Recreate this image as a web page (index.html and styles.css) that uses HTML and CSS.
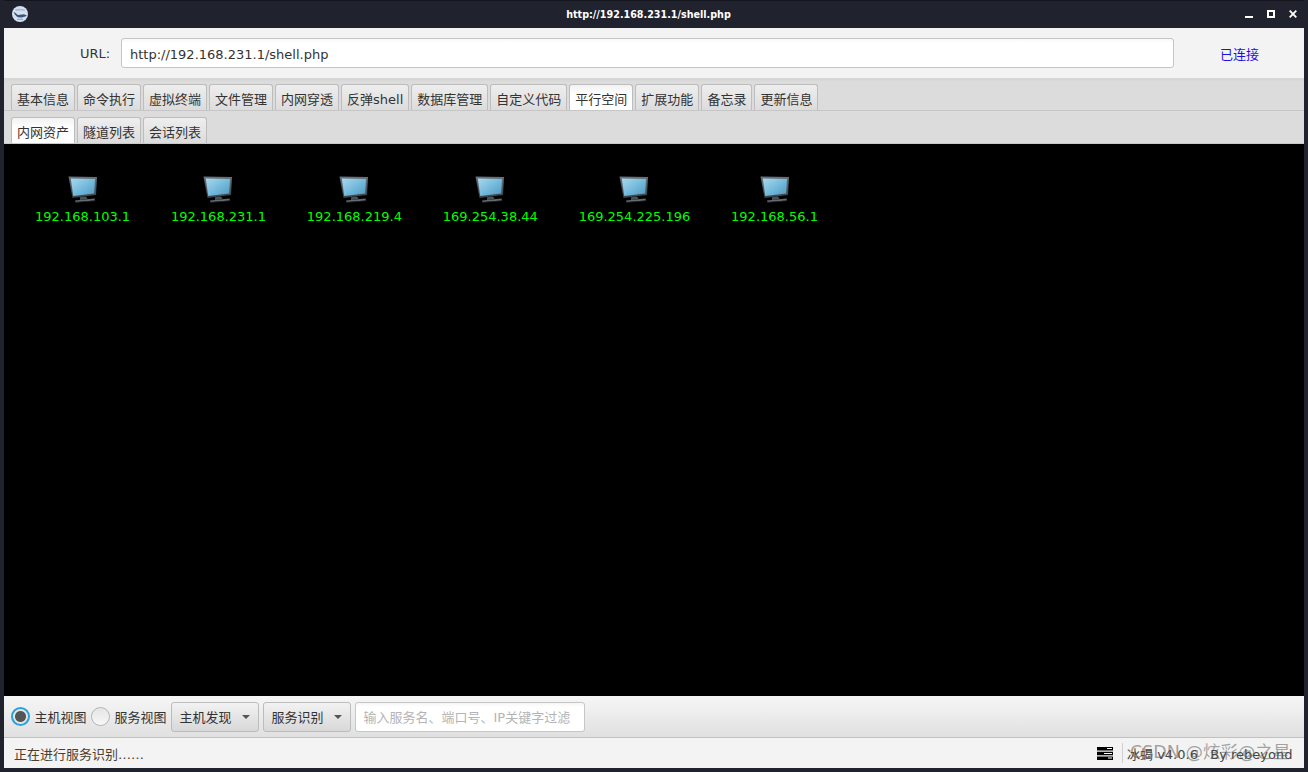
FILE: index.html
```html
<!DOCTYPE html>
<html lang="zh">
<head>
<meta charset="utf-8">
<title>http://192.168.231.1/shell.php</title>
<link rel="stylesheet" href="styles.css">
</head>
<body>
<div class="window">
  <header class="titlebar">
    <svg class="logo" width="16" height="16" viewBox="0 0 16 16"><circle cx="8" cy="8" r="8" fill="#d5e0ee"/><path d="M3 3.500C6 2.500 10 2.500 13 3.500L12.500 5C10 4.300 7 4.300 4 5Z" fill="#a9bcd6"/><path d="M1.500 6C3.500 6.500 4.500 8 6 9L12 8.200 15 9.500C13 11 10 11.500 8 11.500 5 11.500 3 9.500 1.500 6Z" fill="#3a5680"/><path d="M5 13.300h6" stroke="#8aa2c4" stroke-width="1"/></svg>
    <span class="title">http://192.168.231.1/shell.php</span>
    <div class="controls">
      <svg width="8" height="8" viewBox="0 0 8 8"><rect y="6" width="8" height="2" fill="#fff"/></svg>
      <svg width="8" height="8" viewBox="0 0 8 8"><path d="M0 0h8v8H0zM2 2v4h4V2z" fill="#fff" fill-rule="evenodd"/></svg>
      <svg width="8" height="8" viewBox="0 0 8 8"><path d="M.7.7l6.600 6.600M7.300.7L.7 7.300" stroke="#fff" stroke-width="1.800"/></svg>
    </div>
  </header>
  <div class="urlbar">
    <label class="url-label">URL:</label>
    <div class="url-input">http://192.168.231.1/shell.php</div>
    <span class="status-link">已连接</span>
  </div>
  <nav class="tabs main-tabs">
    <span class="tab">基本信息</span><span class="tab">命令执行</span><span class="tab">虚拟终端</span><span class="tab">文件管理</span><span class="tab">内网穿透</span><span class="tab">反弹shell</span><span class="tab">数据库管理</span><span class="tab">自定义代码</span><span class="tab active">平行空间</span><span class="tab">扩展功能</span><span class="tab">备忘录</span><span class="tab">更新信息</span>
  </nav>
  <nav class="tabs sub-tabs">
    <span class="tab active">内网资产</span><span class="tab">隧道列表</span><span class="tab">会话列表</span>
  </nav>
  <main class="canvas">
    <div class="host"><svg class="pc" viewBox="0 0 30 27"><use href="#monitor"/></svg><span>192.168.103.1</span></div>
    <div class="host"><svg class="pc" viewBox="0 0 30 27"><use href="#monitor"/></svg><span>192.168.231.1</span></div>
    <div class="host"><svg class="pc" viewBox="0 0 30 27"><use href="#monitor"/></svg><span>192.168.219.4</span></div>
    <div class="host"><svg class="pc" viewBox="0 0 30 27"><use href="#monitor"/></svg><span>169.254.38.44</span></div>
    <div class="host"><svg class="pc" viewBox="0 0 30 27"><use href="#monitor"/></svg><span>169.254.225.196</span></div>
    <div class="host"><svg class="pc" viewBox="0 0 30 27"><use href="#monitor"/></svg><span>192.168.56.1</span></div>
  </main>
  <div class="toolbar">
    <span class="radio on"></span><span class="radio-text">主机视图</span>
    <span class="radio"></span><span class="radio-text">服务视图</span>
    <button class="menu-btn">主机发现<i class="caret"></i></button>
    <button class="menu-btn">服务识别<i class="caret"></i></button>
    <div class="filter">输入服务名、端口号、IP关键字过滤</div>
  </div>
  <footer class="statusbar">
    <span class="status-text">正在进行服务识别……</span>
    <svg class="stack" width="16" height="13" viewBox="0 0 16 13"><path d="M0 0h16v3.500H0zM0 4.700h16v3.500H0zM0 9.500h16v3.500H0z" fill="#000"/><path d="M10 1.500h5M7 6.500h8M11 11h4" stroke="#fff"/></svg>
    <span class="sep"></span>
    <span class="version">冰蝎 v4.0.6&nbsp;&nbsp;&nbsp;By rebeyond<span class="watermark">CSDN @炫彩@之星</span></span>
  </footer>
</div>
<svg class="defs" width="0" height="0">
  <defs>
    <linearGradient id="scr" x1="0" y1="0" x2="1" y2="1"><stop offset="0" stop-color="#a9d8ee"/><stop offset=".55" stop-color="#72b8da"/><stop offset="1" stop-color="#5298c2"/></linearGradient>
    <linearGradient id="frm" x1="0" y1="0" x2="0" y2="1"><stop offset="0" stop-color="#66727d"/><stop offset="1" stop-color="#3a4046"/></linearGradient>
    <symbol id="monitor" viewBox="0 0 30 27">
      <path d="M0.500 .5L29 1 28 19 4.500 22Z" fill="url(#frm)"/>
      <path d="M2.800 2.500L27 3 26.200 17.500 5.200 20Z" fill="url(#scr)"/>
      <path d="M12 21.200L18 20.500 19.500 23 12 24Z" fill="#4b5258"/>
      <path d="M7 24.500L26.500 22.500 27 24.500 7.500 26Z" fill="#666c72"/>
      <path d="M7.500 26L27 24.500V25L7.500 26.700Z" fill="#2d3135"/>
    </symbol>
  </defs>
</svg>
</body>
</html>
```
FILE: styles.css
```css
* { box-sizing: border-box; }
html, body { margin: 0; height: 100%; }
body { background: #20232e; font: 13px "DejaVu Sans", "Noto Sans CJK SC", sans-serif; color: #333; overflow: hidden; }
.window { display: flex; flex-direction: column; width: 1308px; height: 772px; padding: 0 4px 4px; background: #20232e; }
.titlebar { position: relative; flex: 0 0 28px; display: flex; align-items: center; justify-content: center; padding-right: 11px; background: #20232e; border-top: 1px solid #14161d; }
.logo { position: absolute; left: 8px; top: 5px; }
.title { color: #fff; font-family: "DejaVu Sans Condensed", "DejaVu Sans", sans-serif; font-size: 10.670px; font-weight: 700; }
.controls { position: absolute; right: 7px; top: 9px; display: flex; gap: 14px; }
.controls svg { display: block; }
.urlbar { flex: 0 0 50px; display: flex; align-items: center; padding: 0 45px 0 76px; background: #f3f3f3; }
.url-label { width: 41px; margin-top: 1px; }
.url-input { width: 1053px; height: 30px; line-height: 31px; padding-left: 8px; background: linear-gradient(#f8f8f8, #fff 4px); border: 1px solid #c6c6c6; border-radius: 3px; color: #333; }
.status-link { margin-left: auto; color: #1e0fe6; }
.tabs { display: flex; gap: 2px; padding-left: 6.500px; background: #dcdcdc; }
.main-tabs { flex: 0 0 33px; align-items: flex-end; padding-top: 6px; background: linear-gradient(#d4d4d4, #dcdcdc 4px); border-bottom: 1px solid #c6c6c6; }
.sub-tabs { flex: 0 0 33px; align-items: flex-end; padding-top: 6px; border-bottom: 1px solid #c8c8c8; }
.tab { height: 26px; padding: 0 4.500px 0 5.500px; line-height: 29px; background: linear-gradient(#eeeeee, #dcdcdc); border: 1px solid #bdbdbd; border-bottom: 0; border-radius: 3px 3px 0 0; white-space: nowrap; }
.tab.active { background: linear-gradient(#f2f2f2, #fff 40%); }
.canvas { flex: 1; display: flex; gap: 40.800px; padding: 32px 0 0 31px; background: #000; }
.host { display: flex; flex-direction: column; align-items: center; color: #00ff00; }
.pc { width: 30px; height: 27px; margin-bottom: 6px; }
.toolbar { flex: 0 0 42px; display: flex; align-items: center; padding-left: 6.500px; background: linear-gradient(#f6f6f6, #e0e0e0); border-bottom: 1px solid #c0c0c0; }
.radio { width: 19px; height: 19px; border-radius: 50%; border: 1px solid #b5b5b5; background: linear-gradient(#e4e4e4, #f8f8f8); }
.radio.on { border: 2px solid #2aa3dc; background: radial-gradient(circle, #555 0 5px, #e6e6e6 6px); }
.radio-text { margin: 0 4px 0 5px; color: #333; }
.menu-btn { display: inline-flex; align-items: center; justify-content: space-between; width: 88px; height: 30px; margin-right: 4px; padding: 0 8px; font: inherit; color: #333; background: linear-gradient(#f2f2f2, #d8d8d8); border: 1px solid #bcbcbc; border-radius: 3px; }
.caret { width: 0; height: 0; border: 4px solid transparent; border-top: 4px solid #555; border-bottom: 0; }
.filter { width: 230px; height: 30px; line-height: 29px; padding-left: 8px; color: #b4b4b4; background: linear-gradient(#f6f6f6, #fff 4px); border: 1px solid #c6c6c6; border-radius: 3px; white-space: nowrap; }
.statusbar { flex: 0 0 30px; display: flex; align-items: center; padding: 0 10px; background: #f3f3f3; }
.status-text { flex: 1; color: #4a4030; }
.stack { margin-right: 9px; }
.sep { width: 1px; height: 20px; margin-right: 4px; background: #d0d0d0; }
.version { position: relative; width: 167px; white-space: nowrap; color: #444; }
.watermark { position: absolute; left: 3px; top: -6px; font-size: 17.500px; color: rgba(90, 90, 90, .55); }
.defs { position: absolute; }
```
